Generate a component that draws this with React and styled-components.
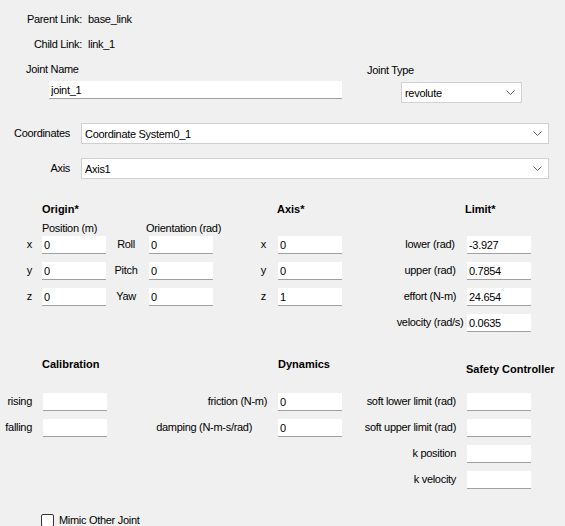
import React from 'react';
import styled, { createGlobalStyle } from 'styled-components';

const Global = createGlobalStyle`
  html, body { margin: 0; padding: 0; background: #f0f0f0; }
  body { font-family: "Liberation Sans", Arial, sans-serif; font-size: 11px; color: #000; }
  * { box-sizing: border-box; }
`;

const Page = styled.div`
  width: 565px;
  height: 526px;
  overflow: hidden;
  background: #f0f0f0;
  padding-top: 13px;
  display: flex;
  flex-direction: column;
  letter-spacing: -0.3px;
`;

const InfoGrid = styled.div`
  display: grid;
  grid-template-columns: 82px auto;
  column-gap: 6px;
  row-gap: 12px;
  grid-auto-rows: 13px;
  line-height: 13px;
`;

const InfoLabel = styled.span`
  text-align: right;
`;

const JointRow = styled.div`
  display: grid;
  grid-template-columns: 342px 1fr;
  margin-top: 12px;
`;

const FieldStack = styled.div`
  display: flex;
  flex-direction: column;
  gap: 5px;
  padding-left: ${p => p.$pad}px;
  margin-top: ${p => p.$top || 0}px;
`;

const StackLabel = styled.span`
  line-height: 13px;
`;

const TextBox = styled.input`
  width: ${p => p.$w || 64}px;
  height: 18px;
  margin: 0 0 0 ${p => p.$ml || 0}px;
  border: none;
  border-bottom: 1px solid #a0a0a0;
  background: #fff;
  padding: 0 2px;
  font: inherit;
  letter-spacing: inherit;
  color: #000;
  outline: none;
`;

const ComboBox = styled.div`
  width: ${p => p.$w}px;
  height: 21px;
  margin-left: ${p => p.$ml || 0}px;
  background: #fff;
  border: 1px solid #d0d0d0;
  display: flex;
  align-items: center;
  justify-content: space-between;
  padding: 0 6px 0 3px;
`;

const ComboText = styled.span`
  white-space: nowrap;
`;

const Chevron = () => (
  <svg width="9" height="5" viewBox="0 0 9 5">
    <polyline points="0.5,0.5 4.5,4.5 8.5,0.5" fill="none" stroke="#606060" strokeWidth="1" />
  </svg>
);

const Combo = ({ w, ml, children }) => (
  <ComboBox $w={w} $ml={ml}>
    <ComboText>{children}</ComboText>
    <Chevron />
  </ComboBox>
);

const SelectRow = styled.div`
  display: grid;
  grid-template-columns: 81px 468px;
  align-items: center;
  margin-top: ${p => p.$top}px;
`;

const SelectLabel = styled.span`
  text-align: right;
  padding-right: 11px;
  margin-top: -2px;
`;

const UpperGrid = styled.div`
  display: grid;
  grid-template-columns: 42px 64px 43px 65px 64px 64px 125px 64px;
  grid-template-rows: 19px 14px repeat(4, 26px);
  align-items: start;
  margin-top: 24px;
`;

const LowerGrid = styled.div`
  display: grid;
  grid-template-columns: 43px 64px 171px 64px 125px 64px;
  grid-template-rows: 35px repeat(4, 26px);
  align-items: start;
  margin-top: 18px;
`;

const Cell = styled.div`
  grid-column: ${p => p.$col};
  grid-row: ${p => p.$row};
`;

const Heading = styled(Cell)`
  font-weight: 700;
  letter-spacing: 0;
  line-height: 13px;
  white-space: nowrap;
  margin-left: ${p => p.$ml || 0}px;
  margin-top: ${p => p.$mt || 0}px;
`;

const SubHeading = styled(Cell)`
  line-height: 13px;
  white-space: nowrap;
  margin-left: ${p => p.$ml || 0}px;
`;

const RowLabel = styled(Cell)`
  height: 18px;
  line-height: 16px;
  white-space: nowrap;
  text-align: ${p => p.$align || 'right'};
  padding-right: ${p => p.$pr || 0}px;
  padding-left: ${p => p.$pl || 0}px;
`;

const Field = ({ col, row, value = '' }) => (
  <Cell $col={col} $row={row}>
    <TextBox defaultValue={value} readOnly />
  </Cell>
);

const MimicRow = styled.label`
  display: flex;
  align-items: center;
  gap: 5px;
  padding-left: 41px;
  margin-top: 17px;
  line-height: 13px;
`;

const CheckBox = styled.span`
  width: 13px;
  height: 13px;
  border: 1px solid #333;
  border-radius: 2px;
  background: #fff;
  flex: none;
`;

export default function App() {
  const origin = [
    ['x', 'Roll'],
    ['y', 'Pitch'],
    ['z', 'Yaw'],
  ];
  const axis = [['x', '0'], ['y', '0'], ['z', '1']];
  const limits = [
    ['lower (rad)', '-3.927'],
    ['upper (rad)', '0.7854'],
    ['effort (N-m)', '24.654'],
    ['velocity (rad/s)', '0.0635'],
  ];
  const safety = ['soft lower limit (rad)', 'soft upper limit (rad)', 'k position', 'k velocity'];

  return (
    <>
      <Global />
      <Page>
        <InfoGrid>
          <InfoLabel>Parent Link:</InfoLabel>
          <span>base_link</span>
          <InfoLabel>Child Link:</InfoLabel>
          <span>link_1</span>
        </InfoGrid>

        <JointRow>
          <FieldStack $pad={26}>
            <StackLabel>Joint Name</StackLabel>
            <TextBox $w={293} $ml={23} defaultValue="joint_1" readOnly />
          </FieldStack>
          <FieldStack $pad={25} $top={1}>
            <StackLabel>Joint Type</StackLabel>
            <Combo w={121} ml={34}>revolute</Combo>
          </FieldStack>
        </JointRow>

        <SelectRow $top={20}>
          <SelectLabel>Coordinates</SelectLabel>
          <Combo w={468}>Coordinate System0_1</Combo>
        </SelectRow>
        <SelectRow $top={14}>
          <SelectLabel>Axis</SelectLabel>
          <Combo w={468}>Axis1</Combo>
        </SelectRow>

        <UpperGrid>
          <Heading $col="2 / span 3" $row={1}>Origin*</Heading>
          <Heading $col="6 / span 2" $row={1} $ml={-1}>Axis*</Heading>
          <Heading $col="8" $row={1} $ml={-2}>Limit*</Heading>
          <SubHeading $col="2 / span 2" $row={2}>Position (m)</SubHeading>
          <SubHeading $col="4 / span 2" $row={2} $ml={-3}>Orientation (rad)</SubHeading>

          {origin.map(([a, b], i) => (
            <React.Fragment key={a}>
              <RowLabel $col={1} $row={i + 3} $pr={10}>{a}</RowLabel>
              <Field col={2} row={i + 3} value="0" />
              <RowLabel $col={3} $row={i + 3} $align="center" $pr={3}>{b}</RowLabel>
              <Field col={4} row={i + 3} value="0" />
            </React.Fragment>
          ))}

          {axis.map(([a, v], i) => (
            <React.Fragment key={'ax' + a}>
              <RowLabel $col={5} $row={i + 3} $pr={12}>{a}</RowLabel>
              <Field col={6} row={i + 3} value={v} />
            </React.Fragment>
          ))}

          {limits.map(([l, v], i) => (
            <React.Fragment key={l}>
              <RowLabel $col={7} $row={i + 3} $align="center" $pl={51}>{l}</RowLabel>
              <Field col={8} row={i + 3} value={v} />
            </React.Fragment>
          ))}
        </UpperGrid>

        <LowerGrid>
          <Heading $col="2 / span 2" $row={1} $ml={-1}>Calibration</Heading>
          <Heading $col="4 / span 2" $row={1}>Dynamics</Heading>
          <Heading $col="6" $row={1} $ml={-1} $mt={5}>Safety Controller</Heading>

          <RowLabel $col={1} $row={2} $pr={11}>rising</RowLabel>
          <Field col={2} row={2} />
          <RowLabel $col={1} $row={3} $pr={11}>falling</RowLabel>
          <Field col={2} row={3} />

          <RowLabel $col={3} $row={2} $pr={11}>friction (N-m)</RowLabel>
          <Field col={4} row={2} value="0" />
          <RowLabel $col={3} $row={3} $pr={26}>damping (N-m-s/rad)</RowLabel>
          <Field col={4} row={3} value="0" />

          {safety.map((s, i) => (
            <React.Fragment key={s}>
              <RowLabel $col={5} $row={i + 2} $pr={11}>{s}</RowLabel>
              <Field col={6} row={i + 2} />
            </React.Fragment>
          ))}
        </LowerGrid>

        <MimicRow>
          <CheckBox />
          <span>Mimic Other Joint</span>
        </MimicRow>
      </Page>
    </>
  );
}
